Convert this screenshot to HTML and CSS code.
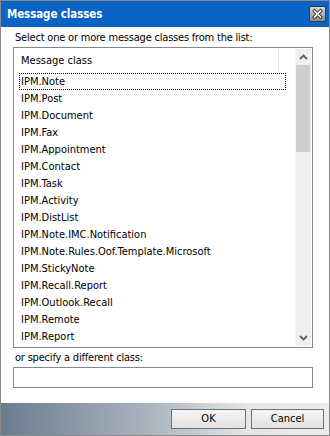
FILE: index.html
```html
<!DOCTYPE html>
<html lang="en">
<head>
  <meta charset="UTF-8" />
  <title>Message classes</title>
  <link rel="stylesheet" href="styles.css">
</head>
<body>

<div class="window">
  <div class="titlebar">
    <span class="title">Message classes</span>
    <span class="close">
      <svg width="15" height="14" viewBox="0 0 15 14">
        <path d="M4.5 4 L10.5 10 M10.5 4 L4.5 10" stroke="#333" stroke-width="3.4" stroke-linecap="square"/>
        <path d="M4.5 4 L10.5 10 M10.5 4 L4.5 10" stroke="#fff" stroke-width="1.6" stroke-linecap="square"/>
      </svg>
    </span>
  </div>

  <div class="content">
    <div class="prompt">Select one or more message classes from the list:</div>

    <div class="listbox">
      <div class="list">
        <div class="list-head"><span>Message class</span></div>
        <ul class="items">
          <li class="focused">IPM.Note</li>
          <li>IPM.Post</li>
          <li>IPM.Document</li>
          <li>IPM.Fax</li>
          <li>IPM.Appointment</li>
          <li>IPM.Contact</li>
          <li>IPM.Task</li>
          <li>IPM.Activity</li>
          <li>IPM.DistList</li>
          <li>IPM.Note.IMC.Notification</li>
          <li>IPM.Note.Rules.Oof.Template.Microsoft</li>
          <li>IPM.StickyNote</li>
          <li>IPM.Recall.Report</li>
          <li>IPM.Outlook.Recall</li>
          <li>IPM.Remote</li>
          <li>IPM.Report</li>
        </ul>
      </div>
      <div class="scrollbar">
        <span class="arrow">
          <svg width="9" height="6" viewBox="0 0 9 6"><path d="M1 5 L4.5 1.5 L8 5" fill="none" stroke="#606060" stroke-width="1.8"/></svg>
        </span>
        <div class="track"><div class="thumb"></div></div>
        <span class="arrow">
          <svg width="9" height="6" viewBox="0 0 9 6"><path d="M1 1 L4.5 4.5 L8 1" fill="none" stroke="#606060" stroke-width="1.8"/></svg>
        </span>
      </div>
    </div>

    <div class="prompt other">or specify a different class:</div>
    <input type="text" class="field" />
  </div>

  <div class="footer">
    <button class="btn">OK</button>
    <button class="btn cancel">Cancel</button>
  </div>
</div>

</body>
</html>
```

FILE: styles.css
```css
:root {
  --blue:#0a64c6; --frame:#8a8a8a; --edge:#828790;
}
body{margin:0;font-family:"DejaVu Sans Condensed","DejaVu Sans",sans-serif;font-size:11px;color:#000;}
.window{width:330px;height:436px;box-sizing:border-box;border:1px solid var(--frame);
        background:#fff;display:flex;flex-direction:column;}

.titlebar{height:26px;flex:none;background:var(--blue);display:flex;align-items:center;
          justify-content:space-between;padding:0 3px 0 6px;}
.title{color:#fff;font-weight:bold;font-size:11.5px;letter-spacing:-0.1px;}
.close{width:15px;height:14px;border:1px solid #3a3a3a;border-radius:2px;margin-top:-1px;
       background:linear-gradient(#d8d8d8,#8c8c8c);display:flex;}

.content{flex:1;display:flex;flex-direction:column;padding:3px 16px 0 12px;}
.prompt{height:16px;line-height:16px;padding-left:2px;letter-spacing:-0.2px;}
.listbox{height:301px;box-sizing:border-box;margin-top:1px;border:1px solid var(--edge);
         display:flex;padding:1px;}
.list{flex:1;overflow:hidden;}
.list-head{height:22px;display:flex;align-items:center;}
.list-head span{width:264px;height:22px;line-height:23px;padding-left:6px;box-sizing:border-box;
                border-right:1px solid #e5e5e5;}
.items{list-style:none;margin:0;padding:2px 0 0 4px;}
.items li{height:17px;line-height:18px;padding-left:2px;box-sizing:border-box;}
.items li.focused{outline:1px dotted #000;outline-offset:-1px;width:267px;}

.scrollbar{width:16px;background:#f0f0f0;display:flex;flex-direction:column;}
.arrow{height:16px;display:flex;align-items:center;justify-content:center;}
.track{flex:1;}
.thumb{height:87px;margin:0 1px;background:#cdcdcd;}

.other{margin-top:2px;}
.field{height:21px;box-sizing:border-box;margin:1px 0 0;border:1px solid var(--edge);padding:0;}

.footer{height:32px;flex:none;display:flex;justify-content:flex-end;align-items:center;gap:5px;
        padding-right:5px;
        background:linear-gradient(90deg,#6b7c8f 0%,#a9b4bf 45%,#e4e6e8 75%,#ececec 100%);}
.btn{height:20px;width:75px;border:1px solid #707070;background:linear-gradient(#f4f4f4,#e2e2e2);
     font:inherit;color:#000;padding:0;margin-top:-1px;}
.btn.cancel{width:73px;}
```
